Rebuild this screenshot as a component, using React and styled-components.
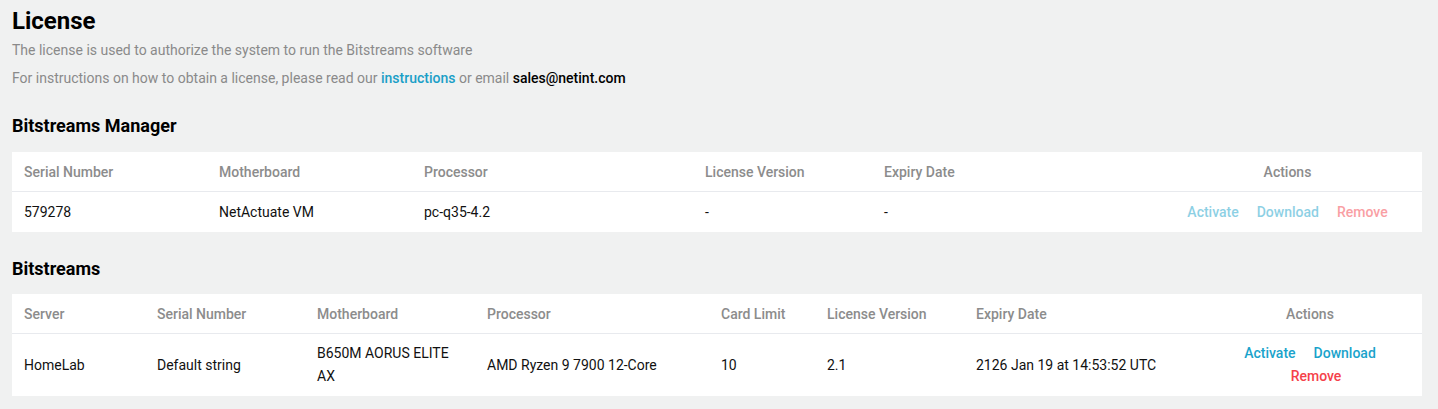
import styled, { createGlobalStyle } from "styled-components";

const GlobalStyle = createGlobalStyle`
  body {
    margin: 0;
    background: #f0f1f1;
    font-family: Roboto, "Liberation Sans", sans-serif;
    color: #111;
  }
`;

const Page = styled.div`
  padding: 0 12px 0 12px;
  width: 1410px;
`;

const Title = styled.h1`
  margin: 6px 0 0;
  font-size: 24px;
  line-height: 30px;
  font-weight: 700;
  color: #000;
`;

const Note = styled.p`
  margin: 0;
  font-size: 14px;
  line-height: 28px;
  color: #8a8a8a;
`;

const DocLink = styled.a`
  color: #1a9fc7;
  font-weight: 500;
  text-decoration: none;
`;

const Email = styled.span`
  color: #000;
  font-weight: 500;
`;

const SectionTitle = styled.h2`
  margin: ${(p) => p.$top}px 0 ${(p) => p.$bottom}px;
  font-size: 18px;
  line-height: 24px;
  font-weight: 700;
  color: #000;
`;

const Table = styled.table`
  width: 100%;
  border-collapse: collapse;
  background: #fff;
  table-layout: fixed;
  font-size: 14px;
`;

const Th = styled.th`
  height: 39px;
  padding: 0 12px;
  text-align: ${(p) => (p.$center ? "center" : "left")};
  font-weight: 500;
  color: #8c8c8c;
  border-bottom: 1px solid #e8eaee;
`;

const Td = styled.td`
  height: ${(p) => p.$h || 40}px;
  padding: 0 12px;
  line-height: 23px;
  color: #111;
  text-align: ${(p) => (p.$center ? "center" : "left")};
`;

const Actions = styled.div`
  display: flex;
  flex-wrap: wrap;
  justify-content: center;
  column-gap: 18px;
  margin: 0 auto;
  max-width: ${(p) => p.$max || 400}px;
`;

const Action = styled.a`
  font-weight: 500;
  text-decoration: none;
  cursor: pointer;
  color: ${(p) => (p.$danger ? "#f5414a" : "#1aa3cb")};
  opacity: ${(p) => (p.$disabled ? 0.5 : 1)};
  margin-left: ${(p) => p.$indent || 0}px;
`;

export default function App() {
  return (
    <Page>
      <GlobalStyle />
      <Title>License</Title>
      <Note>The license is used to authorize the system to run the Bitstreams software</Note>
      <Note>
        For instructions on how to obtain a license, please read our{" "}
        <DocLink href="#">instructions</DocLink> or email <Email>sales@netint.com</Email>
      </Note>

      <SectionTitle $top={22} $bottom={14}>Bitstreams Manager</SectionTitle>
      <Table>
        <colgroup>
          <col style={{ width: 195 }} />
          <col style={{ width: 205 }} />
          <col style={{ width: 281 }} />
          <col style={{ width: 179 }} />
          <col style={{ width: 281 }} />
          <col />
        </colgroup>
        <thead>
          <tr>
            <Th>Serial Number</Th>
            <Th>Motherboard</Th>
            <Th>Processor</Th>
            <Th>License Version</Th>
            <Th>Expiry Date</Th>
            <Th $center>Actions</Th>
          </tr>
        </thead>
        <tbody>
          <tr>
            <Td>579278</Td>
            <Td>NetActuate VM</Td>
            <Td>pc-q35-4.2</Td>
            <Td>-</Td>
            <Td>-</Td>
            <Td $center>
              <Actions>
                <Action $disabled>Activate</Action>
                <Action $disabled>Download</Action>
                <Action $disabled $danger>Remove</Action>
              </Actions>
            </Td>
          </tr>
        </tbody>
      </Table>

      <SectionTitle $top={25} $bottom={13}>Bitstreams</SectionTitle>
      <Table>
        <colgroup>
          <col style={{ width: 133 }} />
          <col style={{ width: 160 }} />
          <col style={{ width: 170 }} />
          <col style={{ width: 234 }} />
          <col style={{ width: 106 }} />
          <col style={{ width: 149 }} />
          <col style={{ width: 234 }} />
          <col />
        </colgroup>
        <thead>
          <tr>
            <Th>Server</Th>
            <Th>Serial Number</Th>
            <Th>Motherboard</Th>
            <Th>Processor</Th>
            <Th>Card Limit</Th>
            <Th>License Version</Th>
            <Th>Expiry Date</Th>
            <Th $center>Actions</Th>
          </tr>
        </thead>
        <tbody>
          <tr>
            <Td $h={62}>HomeLab</Td>
            <Td $h={62}>Default string</Td>
            <Td $h={62}>B650M AORUS ELITE AX</Td>
            <Td $h={62}>AMD Ryzen 9 7900 12-Core</Td>
            <Td $h={62}>10</Td>
            <Td $h={62}>2.1</Td>
            <Td $h={62}>2126 Jan 19 at 14:53:52 UTC</Td>
            <Td $h={62} $center>
              <Actions $max={150}>
                <Action>Activate</Action>
                <Action>Download</Action>
                <Action $danger $indent={12}>Remove</Action>
              </Actions>
            </Td>
          </tr>
        </tbody>
      </Table>
    </Page>
  );
}
